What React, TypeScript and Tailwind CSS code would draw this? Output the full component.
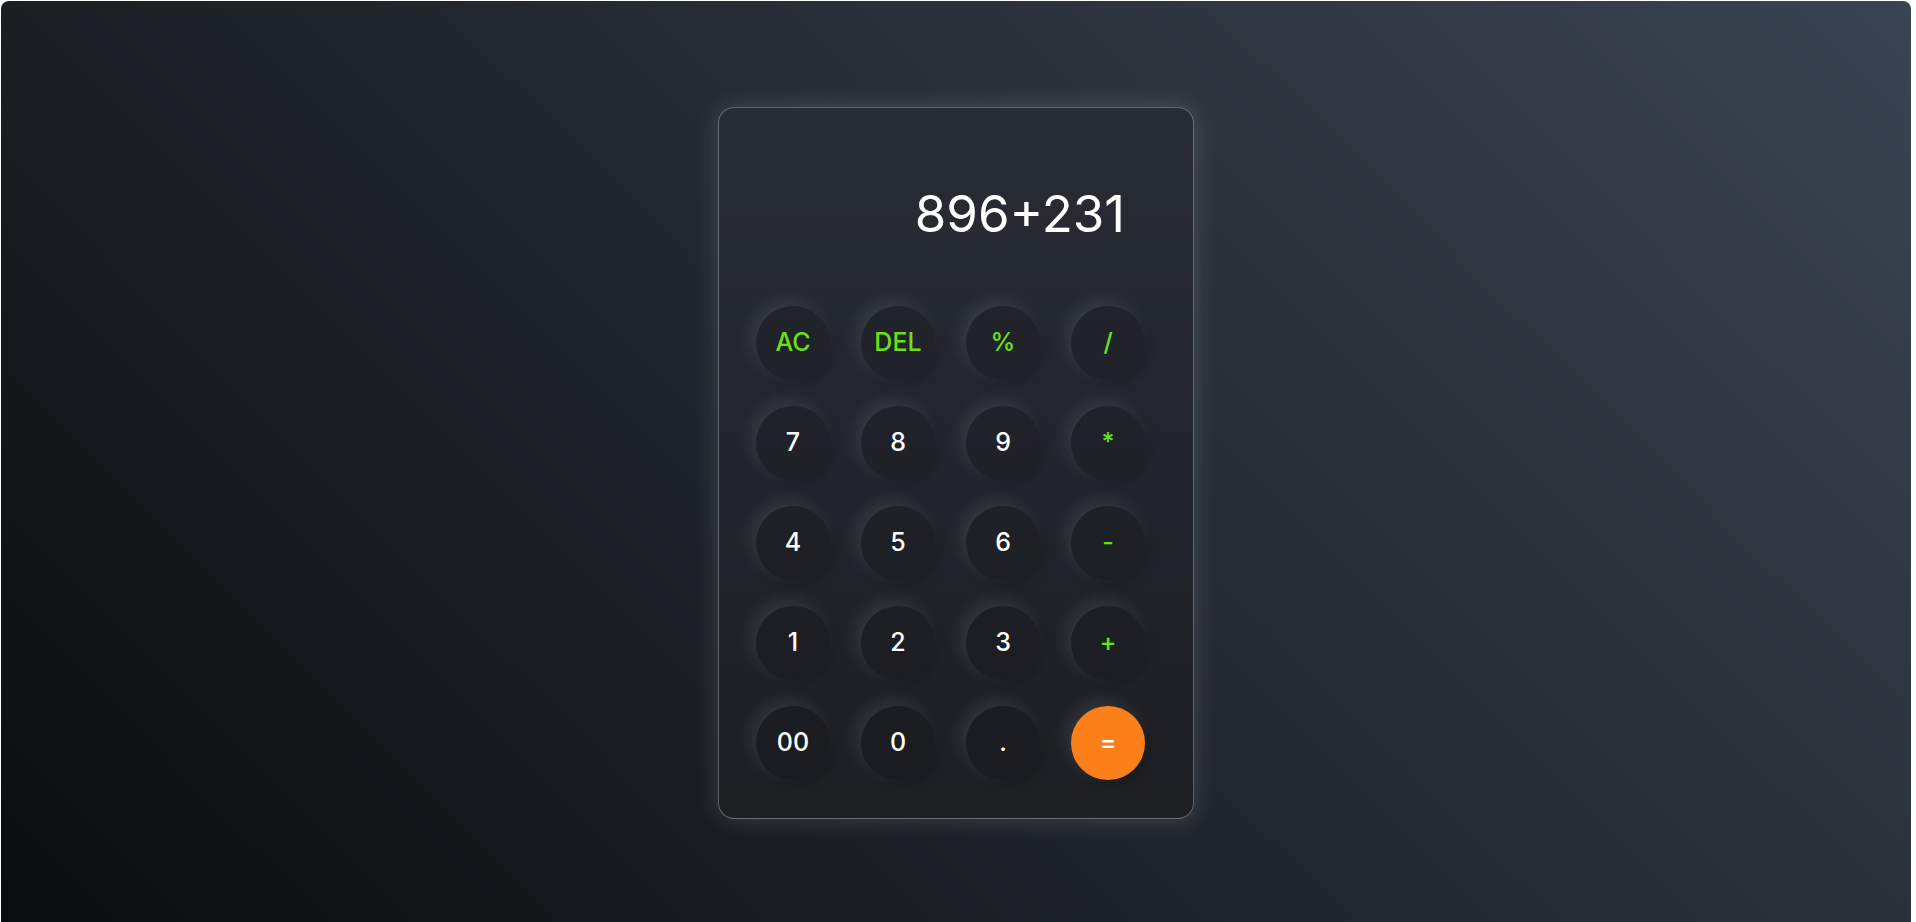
const keys: { label: string; kind: "op" | "num" | "eq" }[] = [
  { label: "AC", kind: "op" },
  { label: "DEL", kind: "op" },
  { label: "%", kind: "op" },
  { label: "/", kind: "op" },
  { label: "7", kind: "num" },
  { label: "8", kind: "num" },
  { label: "9", kind: "num" },
  { label: "*", kind: "op" },
  { label: "4", kind: "num" },
  { label: "5", kind: "num" },
  { label: "6", kind: "num" },
  { label: "-", kind: "op" },
  { label: "1", kind: "num" },
  { label: "2", kind: "num" },
  { label: "3", kind: "num" },
  { label: "+", kind: "op" },
  { label: "00", kind: "num" },
  { label: "0", kind: "num" },
  { label: ".", kind: "num" },
  { label: "=", kind: "eq" },
];

function Key({ label, kind }: { label: string; kind: "op" | "num" | "eq" }) {
  const base =
    "flex h-[74px] w-[74px] items-center justify-center rounded-full text-[25px] font-medium shadow-[-5px_-5px_16px_rgba(255,255,255,0.1),4px_4px_12px_rgba(0,0,0,0.2)]";
  if (kind === "eq") {
    return <button className={base + " bg-[#fb8019] text-white"}>{label}</button>;
  }
  if (kind === "op") {
    return <button className={base + " bg-black/10 text-[#6ce014]"}>{label}</button>;
  }
  return <button className={base + " bg-black/10 text-white"}>{label}</button>;
}

export default function App() {
  return (
    <div className="h-[922px] w-full overflow-hidden bg-white pl-px pr-[5px] pt-px">
      <div
        className="flex h-[930px] flex-col items-center rounded-lg bg-linear-45/srgb from-[#0b0c0d] to-[#3a4452] pt-[106px]"
        style={{ fontFamily: "Inter, 'Noto Sans', sans-serif" }}
      >
        <div className="flex h-[712px] w-[476px] flex-col rounded-2xl border border-white/30 bg-linear-to-b from-[#282c35] to-[#1d1f23] shadow-[0_0_24px_rgba(255,255,255,0.16)]">
          <div className="flex h-[198px] items-center justify-end pr-[68px] pt-[12px]">
            <span className="text-[51px] font-normal leading-none text-white">896+231</span>
          </div>
          <div className="grid grid-cols-[repeat(4,74px)] gap-x-[31px] gap-y-[26px] pl-[37px]">
            {keys.map((k) => (
              <Key key={k.label} label={k.label} kind={k.kind} />
            ))}
          </div>
        </div>
      </div>
    </div>
  );
}
